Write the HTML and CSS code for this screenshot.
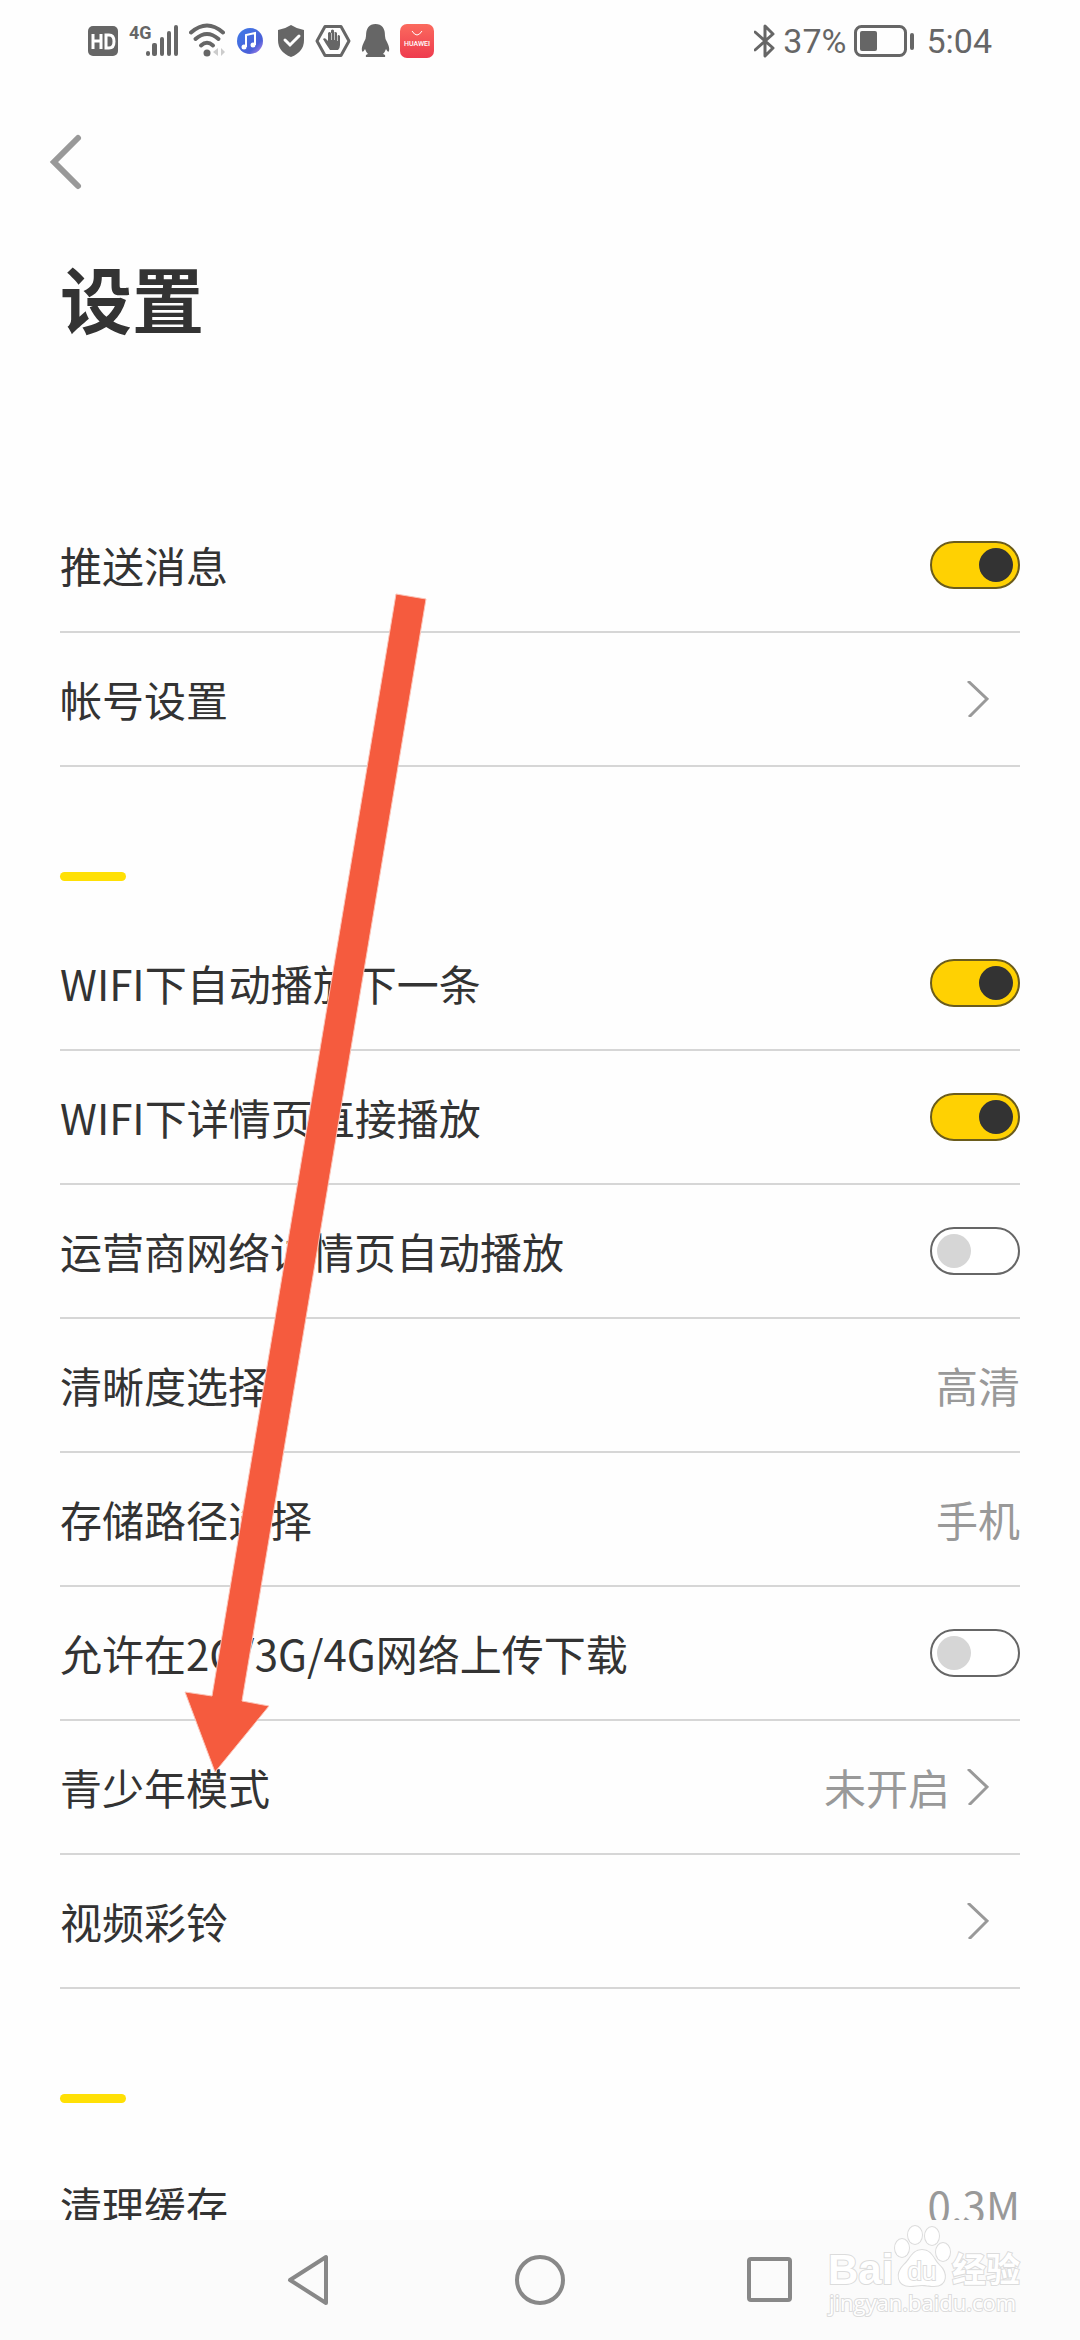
FILE: index.html
```html
<!DOCTYPE html>
<html lang="zh-CN">
<head>
    <meta charset="UTF-8">
    <meta name="viewport" content="width=device-width, initial-scale=1.0">
    <title>设置</title>
    <link rel="stylesheet" href="styles.css">
</head>
<body>
    <div class="status-bar">
        <div class="status-left">
            <svg width="31" height="36" viewBox="0 0 31 36">
                <rect x="0" y="3" width="30" height="30" rx="5" fill="#666"/>
                <path d="M5 11v15M13 11v15M5 18h8M18 12v13h3q5 0 5-6.500t-5-6.500z" fill="none" stroke="#fff" stroke-width="3"/>
            </svg>
            <svg width="50" height="36" viewBox="0 0 50 36">
                <text class="net-label" x="0" y="16">4G</text>
                <g fill="#666">
                    <rect x="17" y="28" width="4" height="5" rx="2"/>
                    <rect x="23" y="20" width="5" height="13" rx="2"/>
                    <rect x="31" y="14" width="4" height="19" rx="2"/>
                    <rect x="38" y="8" width="4" height="25" rx="2"/>
                    <rect x="45" y="2" width="4" height="31" rx="2"/>
                </g>
            </svg>
            <svg width="36" height="36" viewBox="0 0 36 36">
                <g fill="none" stroke="#666" stroke-width="4" stroke-linecap="round">
                    <path d="M2 9.500q16-14 32 0"/>
                    <path d="M6.500 16q11.500-10 23 0"/>
                    <path d="M12 22.500q6-5.500 12 0"/>
                </g>
                <circle cx="18" cy="30" r="3.500" fill="#666"/>
                <path d="M24 29l5-4v8zM36 29l-4-4v8z" fill="#ccc"/>
            </svg>
            <svg width="32" height="36" viewBox="0 0 32 36">
                <defs>
                    <linearGradient id="music" x1="0" y1="0" x2="1" y2="1">
                        <stop offset="0" stop-color="#3f7be8"/>
                        <stop offset=".7" stop-color="#4a5fd8"/>
                        <stop offset="1" stop-color="#c78cf0"/>
                    </linearGradient>
                </defs>
                <circle cx="15" cy="18" r="13" fill="url(#music)"/>
                <path d="M11 24V12l9-2v12" fill="none" stroke="#fff" stroke-width="2"/>
                <circle cx="9" cy="24" r="2.500" fill="#fff"/>
                <circle cx="18" cy="22" r="2.500" fill="#fff"/>
            </svg>
            <svg width="28" height="36" viewBox="0 0 28 36">
                <path d="M14 2Q20 6 27 7v10q0 12-13 17Q1 29 1 17V7q7-1 13-5z" fill="#666"/>
                <path d="M8 17l5 5 9-9" fill="none" stroke="#fff" stroke-width="3" stroke-linecap="round"/>
            </svg>
            <svg width="36" height="36" viewBox="0 0 36 36">
                <path d="M10 3.500h16L34 18l-8 14.500H10L2 18z" fill="none" stroke="#666" stroke-width="3" stroke-linejoin="round"/>
                <path d="M11 21l-3-5q2-2 4 1l1 1V10q1.500-2 3 0V7.500q1.500-2 3 0V10q1.500-2 3 0v3q1.500-2 3 0v9q0 3-2 5H15z" fill="#666"/>
                <path d="M16.500 10v7M19.500 10v7M22.500 12v6" stroke="#fff" stroke-width=".6"/>
            </svg>
            <svg width="29" height="36" viewBox="0 0 29 36">
                <path d="M14.500 1Q24 1 24 13q0 3 2 6 3 6 2 9-1 2-3-2-1 3-3 5 3 1 2 3H5q-1-2 2-3-2-2-3-5-2 4-3 2-1-3 2-9 2-3 2-6Q5 1 14.500 1z" fill="#666"/>
            </svg>
            <svg width="34" height="36" viewBox="0 0 34 36">
                <defs>
                    <linearGradient id="store" x1="0" y1="0" x2="0" y2="1">
                        <stop offset="0" stop-color="#fb6a5e"/>
                        <stop offset="1" stop-color="#ee3b4e"/>
                    </linearGradient>
                </defs>
                <rect y="1" width="34" height="34" rx="7" fill="url(#store)"/>
                <path d="M12 8q5 8 10 0" fill="none" stroke="#fff" stroke-width="1"/>
                <text class="store-label" x="17" y="23">HUAWEI</text>
            </svg>
        </div>
        <div class="status-right">
            <svg width="22" height="36" viewBox="0 0 22 36">
                <path d="M1 9l18 16-8 8V3l8 8L1 27" fill="none" stroke="#666" stroke-width="3" stroke-linejoin="round" stroke-linecap="round"/>
            </svg>
            <span class="percent">37%</span>
            <svg width="62" height="36" viewBox="0 0 62 36">
                <rect x="2.500" y="3.500" width="50" height="29" rx="6" fill="none" stroke="#666" stroke-width="3"/>
                <rect x="7" y="8" width="17" height="20" rx="2" fill="#666"/>
                <rect x="57" y="10" width="4" height="17" rx="2" fill="#666"/>
            </svg>
            <span class="time">5:04</span>
        </div>
    </div>

    <header class="header">
        <button class="back" aria-label="返回">
            <svg width="36" height="60" viewBox="0 0 36 60">
                <path d="M30 6L6 30l24 24" fill="none" stroke="#999" stroke-width="6" stroke-linecap="round"/>
            </svg>
        </button>
        <h1>设置</h1>
    </header>

    <main class="settings">
        <section class="group">
            <label class="row">
                <span class="name">推送消息</span>
                <input type="checkbox" class="switch" checked>
            </label>
            <button class="row">
                <span class="name">帐号设置</span>
                <svg class="chevron" viewBox="0 0 22 36"><path d="M1 0l19 18L2 36"/></svg>
            </button>
        </section>

        <section class="group marked">
            <label class="row">
                <span class="name">WIFI下自动播放下一条</span>
                <input type="checkbox" class="switch" checked>
            </label>
            <label class="row">
                <span class="name">WIFI下详情页直接播放</span>
                <input type="checkbox" class="switch" checked>
            </label>
            <label class="row">
                <span class="name">运营商网络详情页自动播放</span>
                <input type="checkbox" class="switch">
            </label>
            <button class="row">
                <span class="name">清晰度选择</span>
                <span class="value">高清</span>
            </button>
            <button class="row">
                <span class="name">存储路径选择</span>
                <span class="value">手机</span>
            </button>
            <label class="row">
                <span class="name">允许在2G/3G/4G网络上传下载</span>
                <input type="checkbox" class="switch">
            </label>
            <button class="row">
                <span class="name">青少年模式</span>
                <span class="value">未开启</span>
                <svg class="chevron" viewBox="0 0 22 36"><path d="M1 0l19 18L2 36"/></svg>
            </button>
            <button class="row">
                <span class="name">视频彩铃</span>
                <svg class="chevron" viewBox="0 0 22 36"><path d="M1 0l19 18L2 36"/></svg>
            </button>
        </section>

        <section class="group marked">
            <button class="row">
                <span class="name">清理缓存</span>
                <span class="value">0.3M</span>
            </button>
        </section>
    </main>

    <!-- arrow pointing at the teen mode row -->
    <svg class="pointer" width="250" height="1190" viewBox="180 590 250 1190">
        <path d="M396 594l30 5L242 1701l27 5-54 66-30-80 27 4z" fill="#f55b3e" stroke="#fbc4b8" stroke-width="1"/>
    </svg>

    <nav class="nav-bar">
        <button class="nav-btn" aria-label="返回">
            <svg width="56" height="56" viewBox="0 0 56 56"><path d="M44 5v46L8 28z"/></svg>
        </button>
        <button class="nav-btn" aria-label="主页">
            <svg width="56" height="56" viewBox="0 0 56 56"><circle cx="28" cy="28" r="23"/></svg>
        </button>
        <button class="nav-btn" aria-label="最近任务">
            <svg width="56" height="56" viewBox="0 0 56 56"><rect x="7" y="7" width="41" height="41" rx="2"/></svg>
        </button>
        <svg class="watermark" width="200" height="110" viewBox="825 2215 200 110">
            <text class="mark-big" x="828" y="2284">Bai</text>
            <g class="paw">
                <ellipse cx="902" cy="2248" rx="7" ry="9"/>
                <ellipse cx="915" cy="2235" rx="7" ry="9"/>
                <ellipse cx="932" cy="2236" rx="7" ry="9"/>
                <ellipse cx="943" cy="2252" rx="7" ry="9"/>
                <path d="M922 2250c10 0 11 9 17 15 9 8 8 21-5 21-6 0-8-1-12-1s-7 1-12 1c-12 0-15-12-6-21 7-6 8-15 18-15z"/>
            </g>
            <text class="mark-du" x="922" y="2280">du</text>
            <text class="mark-cn" x="952" y="2282">经验</text>
            <text class="mark-url" x="829" y="2311">jingyan.baidu.com</text>
        </svg>
    </nav>
</body>
</html>
```

FILE: styles.css
```css
* {
    margin: 0;
    padding: 0;
    box-sizing: border-box;
}

body {
    position: relative;
    height: 100vh;
    overflow: hidden;
    display: flex;
    flex-direction: column;
    background: #fefefe;
    color: #333;
    font-family: 'Noto Sans CJK SC', sans-serif;
}

button {
    background: none;
    border: none;
    color: inherit;
    font-family: inherit;
    cursor: pointer;
}

svg {
    display: block;
    flex: none;
}

/* status bar */
.status-bar {
    flex: none;
    height: 82px;
    padding: 0 88px;
    display: flex;
    align-items: center;
    justify-content: space-between;
    color: #666;
    font-family: Roboto, sans-serif;
    font-size: 34px;
    line-height: 40px;
}

.status-left {
    display: flex;
    gap: 10px;
}

.status-right {
    display: flex;
    align-items: center;
    gap: 7px;
}

.time {
    margin-left: 4px;
}

.net-label {
    font-family: 'Liberation Sans Narrow', Roboto, sans-serif;
    font-size: 18px;
    font-weight: 700;
    fill: #666;
}

.store-label {
    font-size: 7px;
    font-weight: 500;
    fill: #fff;
    text-anchor: middle;
}

/* header */
.header {
    flex: none;
    padding: 50px 60px 0;
}

.back {
    display: block;
    margin-left: -12px;
}

h1 {
    margin-top: 63px;
    font-size: 72px;
    line-height: 84px;
    font-weight: 700;
}

/* settings list */
.settings {
    flex: 1;
    min-height: 0;
    overflow: hidden;
    padding: 160px 60px 0;
}

.marked::before {
    content: '';
    display: block;
    width: 66px;
    height: 9px;
    margin: 105px 0 36px;
    border-radius: 5px;
    background: #ffe005;
}

.row {
    width: 100%;
    height: 134px;
    display: flex;
    align-items: center;
    border-bottom: 2px solid #d6d6d6;
    font-size: 42px;
    line-height: 60px;
    text-align: left;
    cursor: pointer;
}

.name {
    flex: 1;
}

.value {
    color: #999;
}

.chevron {
    width: 22px;
    height: 36px;
    margin: 0 31px 0 17px;
    fill: none;
    stroke: #999;
    stroke-width: 3;
}

.switch {
    appearance: none;
    flex: none;
    width: 90px;
    height: 48px;
    padding: 5px;
    display: flex;
    align-items: center;
    border: 2px solid #666;
    border-radius: 24px;
    background: #fff;
    cursor: pointer;
}

.switch::before {
    content: '';
    width: 34px;
    height: 34px;
    border-radius: 50%;
    background: #d6d6d6;
}

.switch:checked {
    justify-content: flex-end;
    border-color: #6b5c1c;
    background: #ffd102;
}

.switch:checked::before {
    background: #333;
}

.pointer {
    position: absolute;
    left: 180px;
    top: 590px;
    pointer-events: none;
}

/* navigation bar */
.nav-bar {
    position: relative;
    flex: none;
    height: 120px;
    display: flex;
    align-items: center;
    justify-content: center;
    gap: 120px;
    background: #fbfbfb;
}

.nav-btn {
    width: 110px;
    display: flex;
    justify-content: center;
}

.nav-btn svg {
    fill: none;
    stroke: #888;
    stroke-width: 4;
    stroke-linejoin: round;
}

.watermark {
    position: absolute;
    right: 55px;
    bottom: 15px;
    fill: #fff;
    stroke: #dcdcdc;
    stroke-width: 2;
    paint-order: stroke;
}

.mark-big {
    font-family: 'Liberation Sans', sans-serif;
    font-size: 42px;
    font-weight: 700;
}

.mark-du {
    font-family: 'Liberation Sans', sans-serif;
    font-size: 26px;
    text-anchor: middle;
}

.mark-cn {
    font-size: 34px;
    font-weight: 700;
}

.mark-url {
    font-family: 'Open Sans', sans-serif;
    font-size: 22px;
}
```
